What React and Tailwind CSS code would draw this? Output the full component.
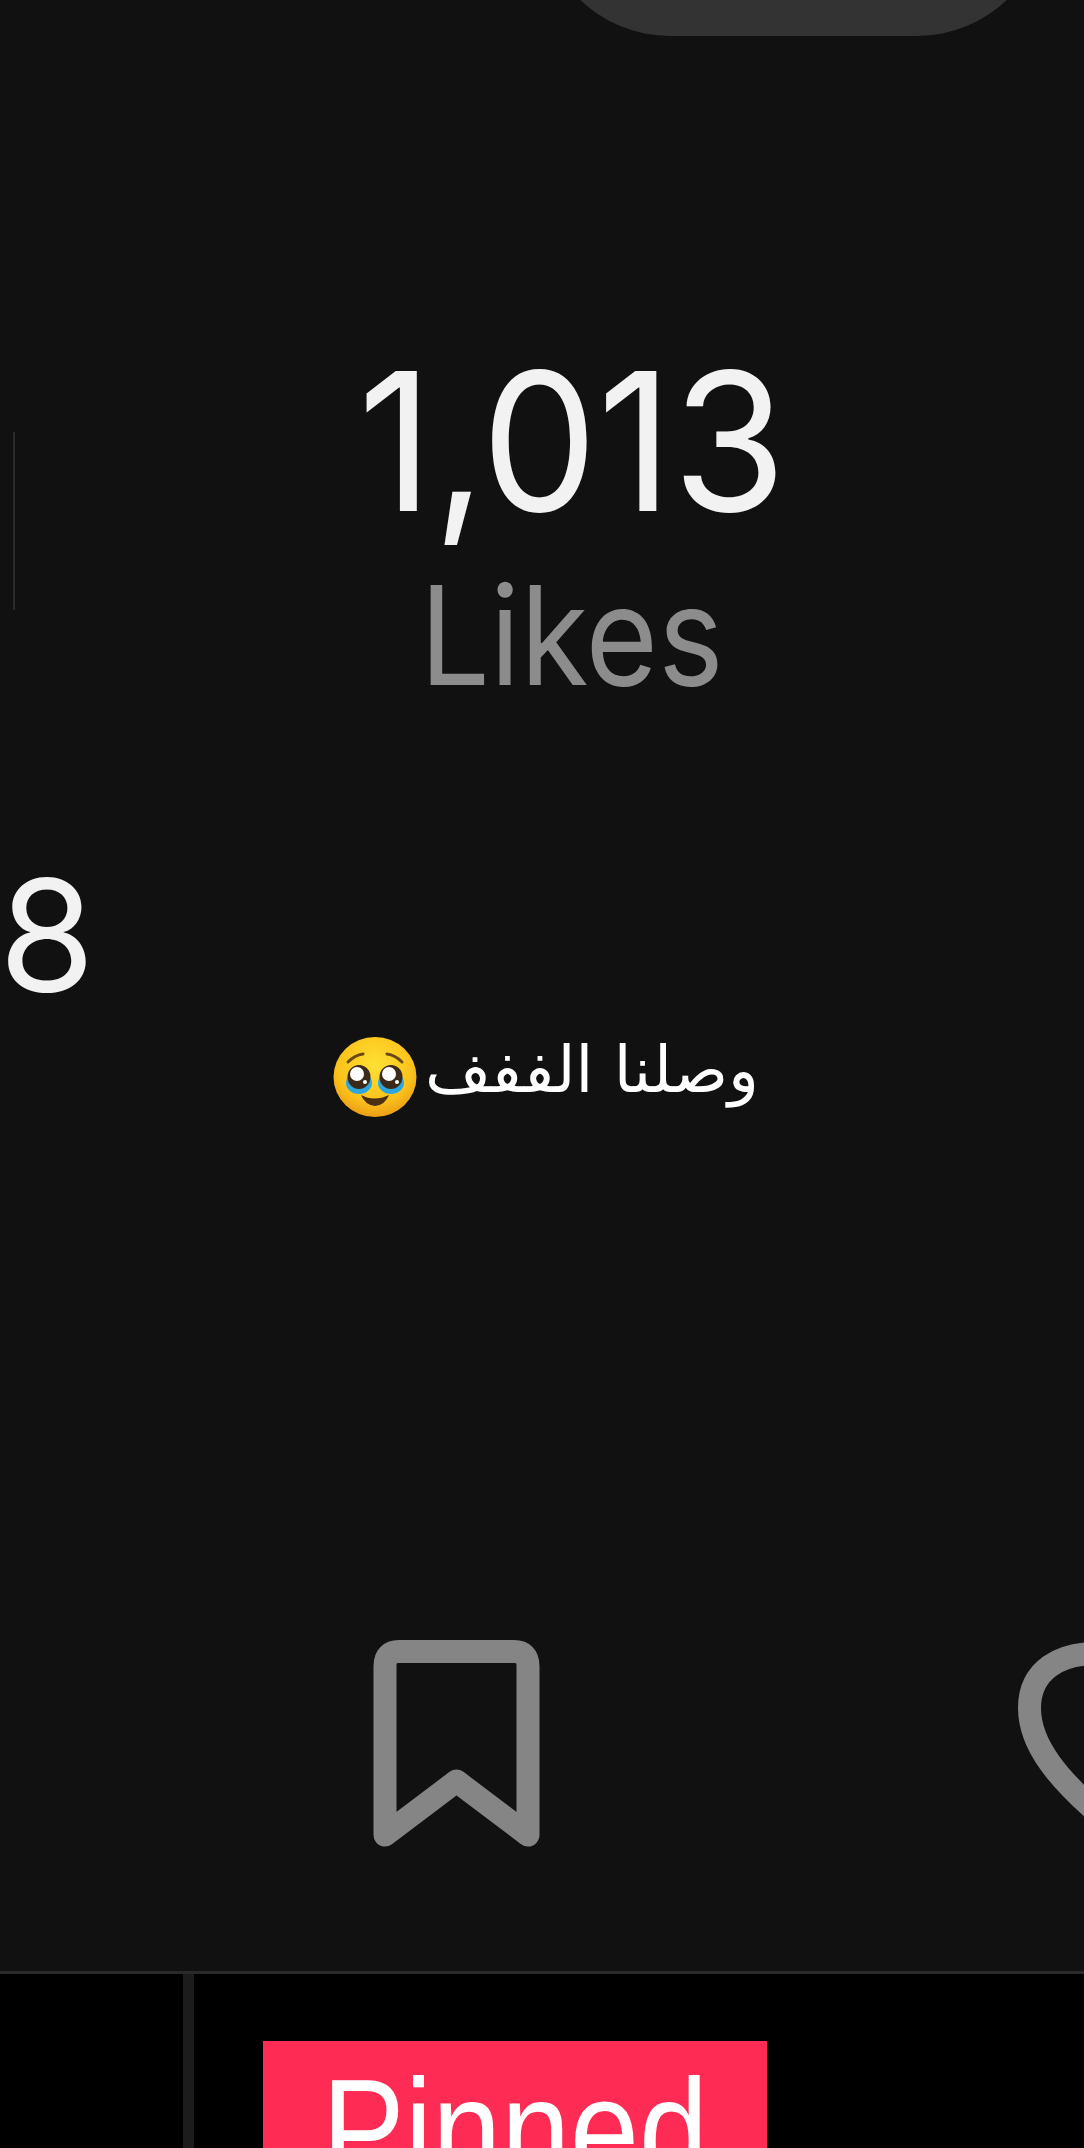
function Bookmark() {
  return (
    <svg width="167" height="207" viewBox="0 0 167 207" className="shrink-0">
      <path
        fill="none"
        stroke="#858585"
        strokeWidth="23"
        strokeLinejoin="round"
        d="M12 195V26Q12 11.5 26 11.5H141Q155 11.5 155 26V195L83.5 141Z"
      />
    </svg>
  );
}

function Heart() {
  return (
    <svg width="66" height="190" viewBox="0 0 66 190" className="shrink-0">
      <path
        fill="none"
        stroke="#858585"
        strokeWidth="23"
        d="M90 14C40 10 11.5 32 11.5 68C11.5 105 40 140 90 182"
      />
    </svg>
  );
}

function Emoji() {
  return (
    <svg width="84" height="80" viewBox="0 0 84 80" className="shrink-0">
      <defs>
        <radialGradient id="face" cx="50%" cy="35%" r="65%">
          <stop offset="0%" stopColor="#fee133" />
          <stop offset="70%" stopColor="#fcc21b" />
          <stop offset="100%" stopColor="#eb9f16" />
        </radialGradient>
      </defs>
      <ellipse cx="42" cy="40" rx="41.5" ry="40" fill="url(#face)" />
      <path d="M15 25Q22 18 30 17" fill="none" stroke="#6b4a12" strokeWidth="3" strokeLinecap="round" />
      <path d="M69 25Q62 18 54 17" fill="none" stroke="#6b4a12" strokeWidth="3" strokeLinecap="round" />
      <ellipse cx="26" cy="46" rx="13" ry="11" fill="#2ea7dd" />
      <ellipse cx="58" cy="46" rx="13" ry="11" fill="#2ea7dd" />
      <ellipse cx="26" cy="40" rx="11.5" ry="12" fill="#3a2a1c" />
      <ellipse cx="58" cy="40" rx="11.5" ry="12" fill="#3a2a1c" />
      <ellipse cx="24" cy="37" rx="7" ry="7" fill="#fff" />
      <ellipse cx="56" cy="37" rx="7" ry="7" fill="#fff" />
      <circle cx="32" cy="45" r="2" fill="#fff" />
      <circle cx="64" cy="45" r="2" fill="#fff" />
      <path d="M28 58Q41 65 56 58Q52 68 42 69Q32 68 28 58Z" fill="#4a2f12" />
    </svg>
  );
}

export default function App() {
  return (
    <div className="flex h-[2148px] w-[1084px] flex-col overflow-hidden bg-[#111111] font-['Inter',sans-serif]">
      <div className="flex h-[1971px] shrink-0 flex-col overflow-hidden">
        <div className="-mt-[130px] ml-[540px] h-[166px] w-[507px] shrink-0 rounded-b-[130px] bg-[#333333]" />

        <div className="flex items-start">
          <div className="ml-[13px] mt-[396px] h-[178px] w-[2px] bg-[#2a2a2a]" />
          <div className="ml-[257px] mt-[290px] flex w-[600px] flex-col items-center">
            <div className="h-[230px] scale-x-[0.96] text-[192px] font-[380] leading-[230px] text-[#f2f2f2]">1,013</div>
            <div className="-mt-[6px] h-[170px] scale-x-[0.9] text-[138px] font-normal leading-[170px] text-[#8c8c8c]">Likes</div>
          </div>
        </div>

        <div className="ml-[-1px] mt-[120px] h-[190px] text-[155px] font-[380] leading-[190px] text-[#f2f2f2]">8</div>

        <div className="ml-[333px] mt-[7px] flex h-[80px] items-center gap-[8px]">
          <Emoji />
          <div dir="rtl" className="pb-[14px] font-['DejaVu_Sans',sans-serif] text-[64px] leading-[80px] text-white">وصلنا الففف</div>
        </div>

        <div className="ml-[373px] mt-[523px] flex items-start gap-[478px]">
          <Bookmark />
          <Heart />
        </div>
      </div>

      <div className="flex min-h-0 flex-1 border-t-[3px] border-[#2a2a2a] bg-black">
        <div className="h-full w-[194px] shrink-0 border-r-[11px] border-[#1c1c1c]" />
        <div className="ml-[69px] mt-[67px] h-[140px] w-[504px] shrink-0 bg-[#fe2c55] pt-[8px] text-center font-['Liberation_Sans',sans-serif] text-[124px] leading-[140px] text-white">
          <div className="origin-top scale-y-[1.16]">Pinned</div>
        </div>
      </div>
    </div>
  );
}
